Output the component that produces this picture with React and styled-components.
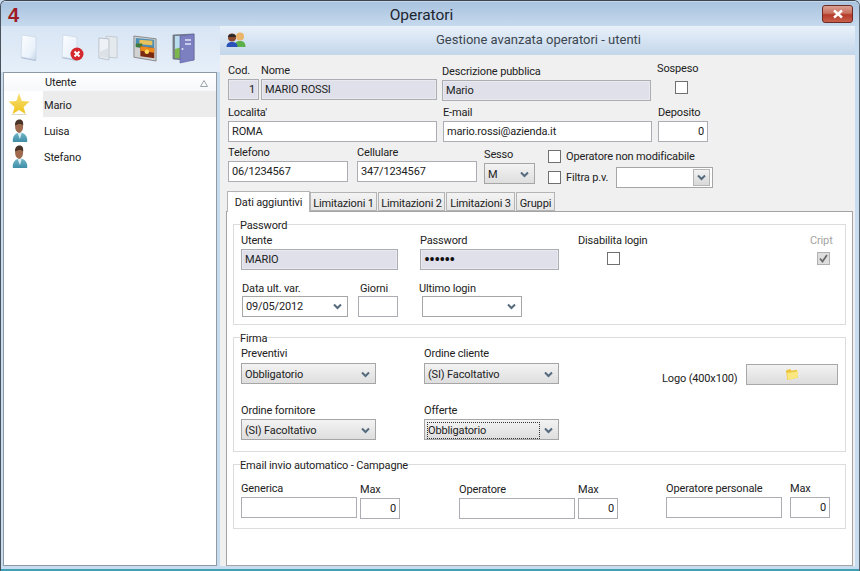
import styled, { createGlobalStyle } from "styled-components";

const Global = createGlobalStyle`
    html, body { margin: 0; padding: 0; background: #c9dcef; }
    * { box-sizing: border-box; }
`
const FONT = `Roboto, "Noto Sans", sans-serif`

const Win = styled.div`
    width: 860px;
    height: 571px;
    display: flex;
    flex-direction: column;
    overflow: hidden;
    font-family: ${FONT};
    font-size: 11px;
    letter-spacing: -0.15px;
    color: #222;
    background: #c8dcf0;
    border-top: 1px solid #3c4450;
    border-left: 1px solid #4a525c;
    border-right: 1px solid #59636e;
    border-radius: 6px 6px 0 0;
`
const TitleBar = styled.div`
    height: 25px;
    flex: none;
    display: flex;
    align-items: center;
    padding: 2px 6px 0 7px;
    background: linear-gradient(#a9c3df, #c6d9ed);
    border-top: 1px solid #c8d8e8;
`
const Four = styled.span`
    font-family: "Liberation Sans", sans-serif;
    font-weight: bold;
    font-size: 20px;
    color: #a01c24;
    width: 22px;
    line-height: 20px;
`
const Title = styled.div`
    flex: 1;
    text-align: center;
    font-size: 15.5px;
    letter-spacing: 0;
    color: #1e2630;
    padding-right: 9px;
`
const CloseBtn = styled.div`
    width: 31px;
    height: 18px;
    align-self: flex-start;
    margin-top: 1px;
    border: 1px solid #6e2a22;
    border-radius: 3px;
    display: flex;
    align-items: center;
    justify-content: center;
    background: linear-gradient(#dba092 0%, #c9705f 45%, #b5392a 55%, #c8604c 100%);
`
const Body = styled.div`
    flex: 1;
    display: flex;
    min-height: 0;
    padding-bottom: 3px;
    border-bottom: 2px solid #3f9fb4;
`
const Side = styled.div`
    width: 219px;
    flex: none;
    display: flex;
    flex-direction: column;
`
const Tools = styled.div`
    height: 46px;
    flex: none;
    display: flex;
    align-items: center;
    background: linear-gradient(#d8e5f4, #e6eff9);
    padding: 0 0 2px 0;
`
const ToolSlot = styled.div`
    width: ${p => p.$w}px;
    flex: none;
    display: flex;
    justify-content: center;
`
const List = styled.div`
    flex: 1;
    margin: 0 3px 0 2px;
    border: 1px solid #8e99a6;
    background: #fff;
`
const ListHead = styled.div`
    height: 18px;
    padding: 2px 8px 0 41px;
    display: flex;
    align-items: center;
    justify-content: space-between;
    line-height: 18px;
    background: linear-gradient(#fff, #f7f8fa);
`
const ListRow = styled.div`
    height: 26px;
    display: flex;
    align-items: center;
`
const ListIcon = styled.div`
    width: 39px;
    flex: none;
    display: flex;
    justify-content: center;
    padding-right: 8px;
`
const ListName = styled.div`
    flex: 1;
    height: 26px;
    line-height: 29px;
    padding-left: 1px;
    background: ${p => (p.$sel ? "#ececec" : "transparent")};
`
const Main = styled.div`
    flex: 1;
    display: flex;
    flex-direction: column;
    min-width: 0;
    margin-right: 4px;
    background: #f0f0f0;
`
const Header = styled.div`
    height: 29px;
    flex: none;
    display: flex;
    align-items: center;
    padding: 0 0 2px 6px;
    border-radius: 4px 0 0 0;
    background: linear-gradient(#e9f1fa, #c3d6ea);
`
const HeaderText = styled.div`
    flex: 1;
    text-align: center;
    font-size: 13px;
    letter-spacing: 0;
    color: #3c4650;
    padding-right: 24px;
`
const Form = styled.div`
    padding: 8px 0 0 8px;
`
const Row = styled.div`
    display: flex;
    align-items: flex-start;
    height: ${p => p.$h}px;
`
const Field = styled.div`
    width: ${p => p.$w}px;
    flex: none;
    margin-left: ${p => p.$ml || 0}px;
    margin-top: ${p => p.$mt || 0}px;
    display: flex;
    flex-direction: column;
`
const Label = styled.label`
    height: ${p => p.$h || 16}px;
    line-height: 16px;
    white-space: nowrap;
    margin-left: ${p => p.$ml || 0}px;
    padding-top: ${p => p.$pt || 0}px;
    color: ${p => (p.$muted ? "#a4a4a4" : "#222")};
`
const Input = styled.input`
    width: 100%;
    height: 21px;
    padding: 0 3px;
    border: 1px solid #abadb3;
    outline: none;
    border-radius: 0;
    font: inherit;
    letter-spacing: inherit;
    color: #222;
    text-align: ${p => (p.$num ? "right" : "left")};
    background: ${p => (p.$locked ? "#dfe0ea" : "#fff")};
    box-shadow: ${p => (p.$locked ? "inset 0 0 0 1px #e9e9f0" : "none")};
    &[type="password"] { font-size: 18px; letter-spacing: -1px; color: #111; }
`
const Select = styled.div`
    width: 100%;
    height: 21px;
    display: flex;
    align-items: center;
    justify-content: space-between;
    padding: ${p => (p.$btn ? 1 : 0)}px 5px 0 3px;
    border: 1px solid #a6a6a6;
    white-space: nowrap;
    background: ${p => (p.$btn ? "linear-gradient(#f3f3f3, #dedede)" : "#fff")};
`
const FocusText = styled.span`
    outline: 1px dotted #333;
    flex: 1;
    line-height: 15px;
`
const ArrowSlot = styled.span`
    width: 14px;
    display: flex;
    justify-content: flex-end;
`
const ArrowBox = styled.div`
    width: 17px;
    height: 17px;
    margin-right: -3px;
    display: flex;
    align-items: center;
    justify-content: center;
    border: 1px solid #b6b6b6;
    background: linear-gradient(#f2f2f2, #d8d8d8);
`
const CheckWrap = styled.div`
    display: flex;
    justify-content: ${p => p.$align || "center"};
    padding-top: ${p => p.$pt || 0}px;
    padding-left: ${p => p.$pl || 0}px;
`
const Box = styled.div`
    width: 13px;
    height: 13px;
    flex: none;
    display: flex;
    align-items: center;
    justify-content: center;
    border: 1px solid ${p => (p.$off ? "#b0b0b0" : "#707070")};
    background: ${p => (p.$off ? "#dedede" : "#fff")};
`
const CheckLine = styled.div`
    height: ${p => p.$h}px;
    margin-bottom: ${p => p.$mb || 0}px;
    display: flex;
    align-items: center;
    gap: 5px;
    white-space: nowrap;
`
const CheckText = styled.span`
    width: ${p => p.$w || "auto"};
    flex: none;
`
const Tabs = styled.div`
    display: flex;
    height: 20px;
    align-items: flex-end;
    margin-left: -1px;
    position: relative;
    z-index: 1;
`
const Tab = styled.div`
    height: ${p => (p.$on ? 21 : 19)}px;
    width: ${p => p.$w}px;
    flex: none;
    margin-right: ${p => (p.$on ? 0 : 1)}px;
    margin-bottom: ${p => (p.$on ? -1 : 0)}px;
    padding-top: 3px;
    line-height: 15px;
    text-align: center;
    white-space: nowrap;
    border: 1px solid #b4b4b4;
    border-bottom: ${p => (p.$on ? "none" : "1px solid #b4b4b4")};
    background: ${p => (p.$on ? "#fff" : "linear-gradient(#f3f3f3, #e6e6e6)")};
`
const Panel = styled.div`
    width: 627px;
    margin-left: -2px;
    height: 355px;
    padding: 6px 6px 0;
    background: #fff;
    border: 1px solid #a4a4a4;
`
const Group = styled.fieldset`
    margin: 0 0 ${p => p.$mb || 0}px;
    padding: 0 0 0 7px;
    height: ${p => p.$h}px;
    border: 1px solid #dcdcdc;
    min-width: 0;
`
const Legend = styled.legend`
    margin-left: -1px;
    padding: 0;
    line-height: 15px;
    height: 13px;
`
const LogoLabel = styled.div`
    margin: 27px 8px 0 103px;
    width: 76px;
    line-height: 15px;
    white-space: nowrap;
`
const FileBtn = styled.div`
    width: 92px;
    height: 21px;
    margin-top: 1px;
    display: flex;
    align-items: center;
    justify-content: center;
    border: 1px solid #a8a8a8;
    background: linear-gradient(#f3f3f3, #dcdcdc);
`

const Chevron = () => (
    <svg width="9" height="7" viewBox="0 0 9 7">
        <path d="M1 1.5 L4.5 5 L8 1.5" fill="none" stroke="#566a7e" strokeWidth="2" />
    </svg>
)

const Pick = ({ value, btn, focus }) => (
    <Select $btn={btn}>
        {focus ? <FocusText>{value}</FocusText> : <span>{value}</span>}
        <ArrowSlot><Chevron /></ArrowSlot>
    </Select>
)

const Tick = () => (
    <svg width="9" height="9" viewBox="0 0 9 9">
        <path d="M1 4.5 L3.5 7.5 L8 1" fill="none" stroke="#6a6a6a" strokeWidth="1.8" />
    </svg>
)

const PageIcon = ({ x }) => (
    <svg width={x ? 23 : 18} height="28" viewBox={x ? "0 0 23 28" : "0 0 18 28"}>
        <defs>
            <linearGradient id="pg" x1="0" y1="0" x2="1" y2="1">
                <stop offset="0" stopColor="#fdfeff" />
                <stop offset="0.7" stopColor="#e9f1fa" />
                <stop offset="1" stopColor="#c3d4e8" />
            </linearGradient>
        </defs>
        <path d="M1 24 L16 27 L16 25 L1 22 Z" fill="#9fb2c8" />
        <path d="M2 1 L16 3 L16 26 L1 23 Z" fill="url(#pg)" stroke="#c6d4e4" strokeWidth="0.7" />
        {x && (
            <g>
                <circle cx="16" cy="20" r="6.5" fill="#d4282e" />
                <path d="M13.5 17.5 L18.5 22.5 M18.5 17.5 L13.5 22.5" stroke="#fff" strokeWidth="2" />
            </g>
        )}
    </svg>
)

const CopyIcon = () => (
    <svg width="20" height="26" viewBox="0 0 22 28">
        <path d="M9 1 L21 2 L21 25 L9 24 Z" fill="#e4e9ee" stroke="#b8c0c8" strokeWidth="0.8" />
        <path d="M1 3 L12 4 L12 27 L1 25 Z" fill="#eef2f6" stroke="#a9b3bd" strokeWidth="0.8" />
        <path d="M2 18 L11 14 L11 25 L2 24 Z" fill="#dbe1e7" />
    </svg>
)

const PhotoIcon = () => (
    <svg width="24" height="29" viewBox="0 0 26 29">
        <path d="M1 1 L25 4 L25 28 L1 24 Z" fill="#d2d2d2" stroke="#6f6f6f" strokeWidth="0.8" />
        <path d="M3 3 L23 5 L23 15 L3 13 Z" fill="#4b8fb8" />
        <path d="M7 5 L21 6 L21 11 L7 10 Z" fill="#e8c25c" />
        <path d="M3 9 L10 9 L10 14 L3 13 Z" fill="#3f7a3a" />
        <path d="M8 12 L23 14 L23 25 L8 23 Z" fill="#7a2a10" />
        <path d="M8 12 L23 14 L23 19 L8 17 Z" fill="#ee8a1c" />
        <circle cx="15" cy="18" r="2.5" fill="#ffd95a" />
    </svg>
)

const DoorIcon = () => (
    <svg width="23" height="31" viewBox="0 0 23 31">
        <path d="M1 2 L22 1 L22 27 L15 27 L1 26 Z" fill="#7e8790" stroke="#5f6770" strokeWidth="0.7" />
        <path d="M3 3 L10 3 L10 25 L3 25 Z" fill="#b9dcef" />
        <path d="M3 16 L10 14 L10 25 L3 25 Z" fill="#7cb74a" />
        <path d="M8 3 L22 1 L22 27 L8 30 Z" fill="#7c80c0" stroke="#5c60a0" strokeWidth="0.6" />
        <rect x="13" y="6" width="6" height="2" fill="#c9cbeb" />
        <rect x="13" y="10" width="6" height="2" fill="#c9cbeb" />
        <circle cx="10.5" cy="16" r="1" fill="#e4e4f4" />
    </svg>
)

const StarIcon = () => (
    <svg width="22" height="24" viewBox="1 0 24 24" preserveAspectRatio="none">
        <defs>
            <linearGradient id="st" x1="0" y1="0" x2="0" y2="1">
                <stop offset="0" stopColor="#f7e27a" />
                <stop offset="1" stopColor="#efc21c" />
            </linearGradient>
        </defs>
        <path d="M12 1 L15 9 L23.5 9.5 L17 15 L19 22 L12 18 L5 22 L7 15 L0.5 9.5 L9 9 Z" fill="url(#st)" />
        <rect x="4" y="22" width="16" height="1" fill="#d8d8c8" />
    </svg>
)

const UserIcon = () => (
    <svg width="16" height="23" viewBox="0 0 18 24" preserveAspectRatio="none">
        <defs>
            <linearGradient id="usr" x1="0" y1="0" x2="0" y2="1">
                <stop offset="0" stopColor="#72b8c8" />
                <stop offset="1" stopColor="#3f8da6" />
            </linearGradient>
        </defs>
        <path d="M1 24 C0 18 4 14 9 14 C14 14 18 18 17 24 Z" fill="url(#usr)" />
        <path d="M6 14 L9 21 L11 14 Z" fill="#d8eef4" />
        <ellipse cx="8" cy="8" rx="4.5" ry="6.5" fill="#a06a4c" />
        <path d="M3.5 7 C3 2 6 0.5 8.5 0.5 C12 0.5 13 3 12.5 7 C11 4.5 7 4.5 3.5 7 Z" fill="#4a3428" />
    </svg>
)

const GroupIcon = () => (
    <svg width="20" height="16" viewBox="0 0 20 16">
        <circle cx="14" cy="4.5" r="4" fill="#e9b46c" />
        <path d="M8.5 15 C8.5 10 11 9 14 9 C17 9 19.5 10 19.5 15 Z" fill="#5bb04a" />
        <circle cx="6" cy="5.5" r="4" fill="#8a4a30" />
        <path d="M2 5 C2 1 10 1 10 5 Z" fill="#2a2a2a" />
        <path d="M0.5 15 C0.5 11 3 10 6 10 C9 10 11.5 11 11.5 15 Z" fill="#2a52b8" />
    </svg>
)

const FolderIcon = () => (
    <svg width="14" height="13" viewBox="0 0 13 12">
        <path d="M1 2 L5 1 L6 2.5 L11 1.5 L12 9 L2 11 Z" fill="#edc53c" />
        <path d="M2 4.5 L12.5 3 L11.5 9 L2.5 11 Z" fill="#fbe780" />
    </svg>
)

const CloseX = () => (
    <svg width="12" height="10" viewBox="0 0 12 10">
        <path d="M2 1.5 L10 8.5 M10 1.5 L2 8.5" stroke="#fff" strokeWidth="2.4" />
    </svg>
)

const users = [
    { name: "Mario", icon: <StarIcon />, sel: true },
    { name: "Luisa", icon: <UserIcon /> },
    { name: "Stefano", icon: <UserIcon /> },
]

const tabs = [
    { name: "Dati aggiuntivi", w: 83, on: true },
    { name: "Limitazioni 1", w: 67 },
    { name: "Limitazioni 2", w: 67 },
    { name: "Limitazioni 3", w: 69 },
    { name: "Gruppi", w: 39 },
]

export default function App() {
    return (
        <Win>
            <Global />
            <TitleBar>
                <Four>4</Four>
                <Title>Operatori</Title>
                <CloseBtn><CloseX /></CloseBtn>
            </TitleBar>
            <Body>
                <Side>
                    <Tools>
                        <ToolSlot $w={55}><PageIcon /></ToolSlot>
                        <ToolSlot $w={33}><PageIcon x /></ToolSlot>
                        <ToolSlot $w={37}><CopyIcon /></ToolSlot>
                        <ToolSlot $w={38}><PhotoIcon /></ToolSlot>
                        <ToolSlot $w={38}><DoorIcon /></ToolSlot>
                    </Tools>
                    <List>
                        <ListHead>
                            <span>Utente</span>
                            <svg width="8" height="7" viewBox="0 0 8 7">
                                <path d="M4 0.5 L7.5 6.5 L0.5 6.5 Z" fill="none" stroke="#9aa2aa" />
                            </svg>
                        </ListHead>
                        {users.map(({ name, icon, sel }) => (
                            <ListRow key={name}>
                                <ListIcon>{icon}</ListIcon>
                                <ListName $sel={sel}>{name}</ListName>
                            </ListRow>
                        ))}
                    </List>
                </Side>
                <Main>
                    <Header>
                        <GroupIcon />
                        <HeaderText>Gestione avanzata operatori - utenti</HeaderText>
                    </Header>
                    <Form>
                        <Row $h={42}>
                            <Field $w={31}><Label>Cod.</Label><Input $locked $num readOnly value="1" /></Field>
                            <Field $w={176} $ml={2}><Label>Nome</Label><Input $locked readOnly value="MARIO ROSSI" /></Field>
                            <Field $w={209} $ml={5} $mt={1}><Label>Descrizione pubblica</Label><Input $locked readOnly value="Mario" /></Field>
                            <Field $w={50} $ml={5} $mt={-2}>
                                <Label $ml={1} $h={17}>Sospeso</Label>
                                <CheckWrap $pt={3}><Box /></CheckWrap>
                            </Field>
                        </Row>
                        <Row $h={40}>
                            <Field $w={209}><Label>Localita'</Label><Input readOnly value="ROMA" /></Field>
                            <Field $w={209} $ml={6}><Label>E-mail</Label><Input readOnly value="mario.rossi@azienda.it" /></Field>
                            <Field $w={50} $ml={6}><Label>Deposito</Label><Input $num readOnly value="0" /></Field>
                        </Row>
                        <Row $h={46}>
                            <Field $w={120}><Label>Telefono</Label><Input readOnly value="06/1234567" /></Field>
                            <Field $w={120} $ml={9}><Label>Cellulare</Label><Input readOnly value="347/1234567" /></Field>
                            <Field $w={51} $ml={7} $mt={2}><Label>Sesso</Label><Pick value="M" btn /></Field>
                            <Field $w={165} $ml={13} $mt={2}>
                                <CheckLine $h={18} $mb={2}><Box /><CheckText>Operatore non modificabile</CheckText></CheckLine>
                                <CheckLine $h={21}>
                                    <Box /><CheckText $w="45px">Filtra p.v.</CheckText>
                                    <Field $w={97}>
                                        <Select>
                                            <span />
                                            <ArrowBox><Chevron /></ArrowBox>
                                        </Select>
                                    </Field>
                                </CheckLine>
                            </Field>
                        </Row>
                        <Tabs>
                            {tabs.map(({ name, w, on }) => (
                                <Tab key={name} $w={w} $on={on}>{name}</Tab>
                            ))}
                        </Tabs>
                        <Panel>
                            <Group $h={107} $mb={6}>
                                <Legend>Password</Legend>
                                <Row $h={49}>
                                    <Field $w={157} $mt={2}><Label>Utente</Label><Input $locked readOnly value="MARIO" /></Field>
                                    <Field $w={139} $ml={22} $mt={2}><Label>Password</Label><Input $locked type="password" readOnly value="mario1" /></Field>
                                    <Field $w={80} $ml={19} $mt={2}>
                                        <Label>Disabilita login</Label>
                                        <CheckWrap $align="flex-start" $pt={3} $pl={29}><Box /></CheckWrap>
                                    </Field>
                                    <Field $w={30} $ml={152} $mt={2}>
                                        <Label $muted>Cript</Label>
                                        <CheckWrap $align="flex-start" $pt={3} $pl={7}><Box $off><Tick /></Box></CheckWrap>
                                    </Field>
                                </Row>
                                <Row $h={40}>
                                    <Field $w={106} $ml={1}><Label $pt={1}>Data ult. var.</Label><Pick value="09/05/2012" /></Field>
                                    <Field $w={40} $ml={10}><Label $pt={1} $ml={2}>Giorni</Label><Input readOnly value="" /></Field>
                                    <Field $w={100} $ml={24}><Label $pt={1} $ml={-3}>Ultimo login</Label><Pick value="" /></Field>
                                </Row>
                            </Group>
                            <Group $h={121} $mb={6}>
                                <Legend>Firma</Legend>
                                <Row $h={58}>
                                    <Field $w={135} $mt={2}><Label $h={17}>Preventivi</Label><Pick value="Obbligatorio" btn /></Field>
                                    <Field $w={135} $ml={48} $mt={2}><Label $h={17}>Ordine cliente</Label><Pick value="(SI) Facoltativo" btn /></Field>
                                    <LogoLabel>Logo (400x100)</LogoLabel>
                                    <Field $w={92} $mt={2}>
                                        <Label $h={17} />
                                        <FileBtn><FolderIcon /></FileBtn>
                                    </Field>
                                </Row>
                                <Row $h={40}>
                                    <Field $w={135}><Label $h={17} $pt={1}>Ordine fornitore</Label><Pick value="(SI) Facoltativo" btn /></Field>
                                    <Field $w={135} $ml={48}><Label $h={17} $pt={1}>Offerte</Label><Pick value="Obbligatorio" btn focus /></Field>
                                </Row>
                            </Group>
                            <Group $h={71}>
                                <Legend>Email invio automatico - Campagne</Legend>
                                <Row $h={50}>
                                    <Field $w={116} $mt={9}><Label $h={17} $pt={1}>Generica</Label><Input readOnly value="" /></Field>
                                    <Field $w={40} $ml={3} $mt={10}><Label $h={17} $pt={1}>Max</Label><Input $num readOnly value="0" /></Field>
                                    <Field $w={116} $ml={59} $mt={10}><Label $h={17} $pt={1}>Operatore</Label><Input readOnly value="" /></Field>
                                    <Field $w={40} $ml={3} $mt={10}><Label $h={17} $pt={1}>Max</Label><Input $num readOnly value="0" /></Field>
                                    <Field $w={116} $ml={48} $mt={9}><Label $h={17} $pt={1}>Operatore personale</Label><Input readOnly value="" /></Field>
                                    <Field $w={40} $ml={8} $mt={9}><Label $h={17} $pt={1}>Max</Label><Input $num readOnly value="0" /></Field>
                                </Row>
                            </Group>
                        </Panel>
                    </Form>
                </Main>
            </Body>
        </Win>
    )
}
